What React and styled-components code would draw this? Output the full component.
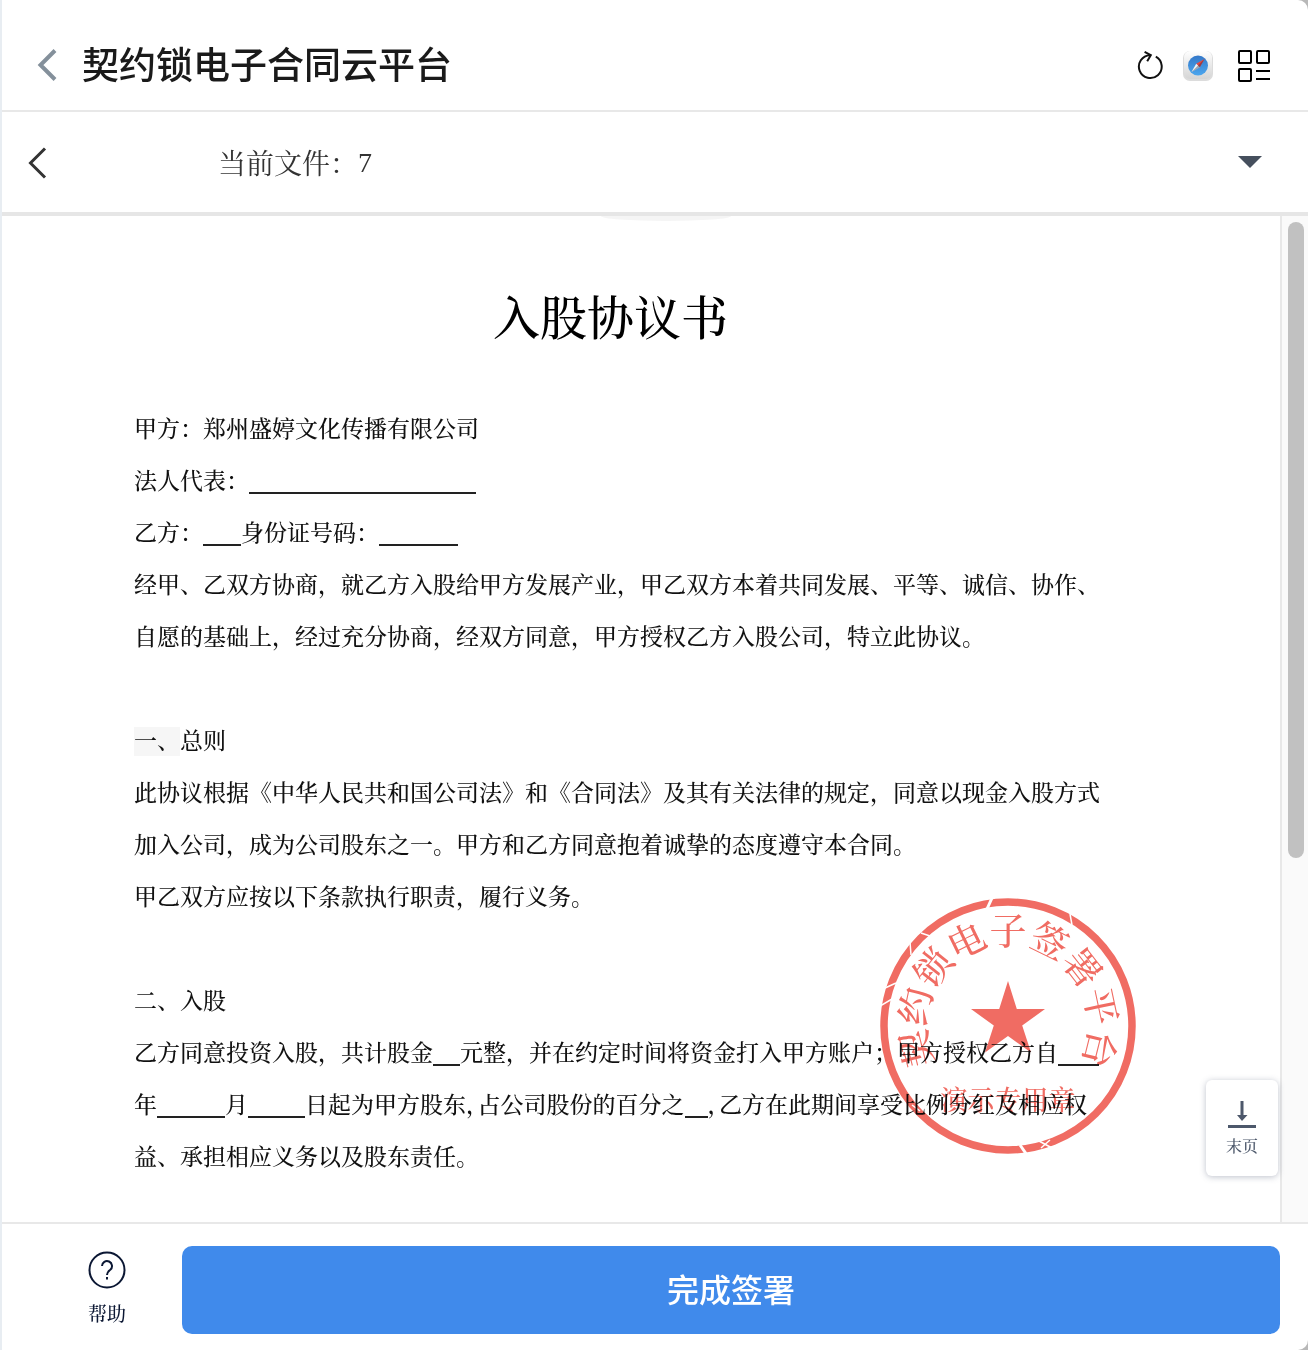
import {Component} from "react";
import styled, {createGlobalStyle} from "styled-components";

const GlobalStyle = createGlobalStyle`
  * {
    box-sizing: border-box;
  }

  body {
    margin: 0;
    background: #b8b8b8;
    color: #1a1a1a;
    font-family: "Liberation Serif", "Noto Serif CJK SC", "Noto Sans CJK SC", serif;
  }

  button, select {
    margin: 0;
    padding: 0;
    border: 0;
    background: none;
    color: inherit;
    font: inherit;
    cursor: pointer;
  }

  svg {
    display: block;
  }
`

const Window = styled.div`
  display: flex;
  flex-direction: column;
  min-height: 100vh;
  border-left: 2px solid #e8edf2;
  border-radius: 0 10px 10px 0;
  background: #fff;
`

const TitleBar = styled.header`
  display: flex;
  align-items: center;
  height: 112px;
  padding: 20px 38px 0 32px;
  border-bottom: 2px solid #e8e8e8;
`

const AppTitle = styled.h1`
  flex: 1;
  margin: 0 0 0 24px;
  padding-bottom: 4px;
  font-family: "Noto Sans CJK SC", sans-serif;
  font-size: 37px;
  font-weight: 500;
  line-height: 52px;
`

const Tools = styled.div`
  display: flex;
  align-items: center;
  gap: 18px;

  button:last-child {
    margin-left: 6px;
  }
`

const FileBar = styled.nav`
  display: flex;
  align-items: center;
  height: 104px;
  padding: 2px 46px 0 22px;
  border-bottom: 4px solid #e6e6e6;
`

const FileLabel = styled.label`
  margin-left: 170px;
  padding-top: 4px;
  color: #333;
  font-size: 28px;
  line-height: 40px;
`

const FileSelect = styled.select`
  flex: 1;
  appearance: none;
  color: #333;
  font-size: 28px;
  line-height: 40px;
`

const Body = styled.main`
  display: flex;
  flex: 1;
`

const Notch = styled.div`
  position: absolute;
  top: 0;
  left: 50%;
  width: 130px;
  height: 5px;
  margin-left: -40px;
  border-radius: 0 0 50% 50% / 0 0 100% 100%;
  background: #f5f5f5;
`

const Paper = styled.article`
  position: relative;
  flex: 1;
  min-width: 0;
  padding: 73px 193px 35px 132px;
  color: #111;
  font-weight: 500;
`

const DocTitle = styled.h2`
  margin: 0 0 55px;
  color: #000;
  font-size: 47px;
  font-weight: 500;
  line-height: 60px;
  text-align: center;
`

const Clause = styled.section`
  margin-bottom: 52px;
`

const Line = styled.p`
  margin: 0;
  font-size: 23px;
  line-height: 52px;
  white-space: nowrap;
`

const Blank = styled.span`
  display: inline-block;
  width: ${props => props.$width}px;
  height: 24px;
  border-bottom: 2px solid #222;
  vertical-align: -5px;
`

const HalfComma = styled.span`
  font-feature-settings: "halt";
`

const Marked = styled.span`
  padding: 2px 0;
  background: #f6f6f6;
`

const Seal = styled.svg`
  position: absolute;
  top: 682px;
  right: 144px;
  mix-blend-mode: multiply;
`

const LastPage = styled.button`
  position: absolute;
  right: 2px;
  bottom: 46px;
  display: flex;
  flex-direction: column;
  align-items: center;
  gap: 7px;
  width: 72px;
  height: 96px;
  padding-top: 20px;
  border-radius: 6px;
  background: #fff;
  box-shadow: 0 1px 6px rgba(70, 80, 110, 0.35);
  color: #4d586b;
  font-size: 16px;
  line-height: 24px;
`

const ScrollTrack = styled.div`
  flex: none;
  width: 28px;
  padding: 6px 4px 6px 6px;
  border-left: 2px solid #e8e8e8;
  background: #fafafa;
`

const ScrollThumb = styled.div`
  height: 64%;
  border-radius: 8px;
  background: #c1c1c1;
`

const ActionBar = styled.footer`
  display: flex;
  align-items: center;
  height: 128px;
  padding: 6px 28px 0 70px;
  border-top: 2px solid #e8e8e8;
`

const HelpButton = styled.button`
  display: flex;
  flex-direction: column;
  align-items: center;
  gap: 12px;
  width: 70px;
  color: #0b1733;
  font-size: 19px;
  font-weight: 500;
  line-height: 28px;
`

const SubmitButton = styled.button`
  flex: 1;
  height: 88px;
  margin-left: 40px;
  padding-bottom: 4px;
  border-radius: 10px;
  background: #408aeb;
  color: #fff;
  font-family: "Noto Sans CJK SC", sans-serif;
  font-size: 32px;
  font-weight: 500;
`

const sealName = "契约锁电子签署平台"

function Chevron({color, weight}) {
    return (
        <svg width="24" height="36" viewBox="0 0 24 36" fill="none" stroke={color} strokeWidth={weight}>
            <path d="M21 3.500 6.500 18 21 32.500"/>
        </svg>
    )
}

function ReloadIcon() {
    return (
        <svg width="28" height="30" viewBox="0 0 28 30" fill="none" stroke="#111" strokeWidth="2">
            <path d="M19.800 6.600A11.400 11.400 0 1 1 14 5.200"/>
            <path d="M8.600 1.800 14.800 5.200l-3.600 6"/>
        </svg>
    )
}

function SafariIcon() {
    return (
        <svg width="32" height="32" viewBox="0 0 32 32">
            <defs>
                <linearGradient id="tile" x1="0" y1="0" x2="0" y2="1">
                    <stop offset="0" stopColor="#fff"/>
                    <stop offset="1" stopColor="#d5d5d5"/>
                </linearGradient>
                <linearGradient id="dial" x1="0" y1="0" x2="0" y2="1">
                    <stop offset="0" stopColor="#3478c9"/>
                    <stop offset="1" stopColor="#4ba6ee"/>
                </linearGradient>
            </defs>
            <rect x="1" y="2" width="30" height="30" rx="7" fill="#dcdcdc"/>
            <rect x="2" y="2" width="28" height="28" rx="6" fill="url(#tile)"/>
            <circle cx="16" cy="16.500" r="10" fill="url(#dial)"/>
            <path d="M22.500 10 14.200 14.700l3.600 3.600z" fill="#e8483f"/>
            <path d="M9.500 23 14.200 14.700l3.600 3.600z" fill="#f4f4f4"/>
            <path d="M22.500 10 17.800 18.300 9.500 23z" fill="#1d2f4d" opacity="0.4"/>
        </svg>
    )
}

function AppsIcon() {
    return (
        <svg width="32" height="34" viewBox="0 -2 32 34" fill="none" stroke="#000" strokeWidth="2">
            <rect x="1" y="1" width="12" height="12" rx="1"/>
            <rect x="19" y="1" width="12" height="12" rx="1"/>
            <rect x="1" y="19" width="12" height="12" rx="1"/>
            <path d="M18 21h14M18 29h14"/>
        </svg>
    )
}

function CompanySeal() {
    return (
        <Seal width="256" height="256" viewBox="0 0 256 256" fill="#f06c63" role="img" aria-label="印章">
            <circle cx="128" cy="128" r="124" fill="none" stroke="#f06c63" strokeWidth="7.500"/>
            <g stroke="#fff" fill="none">
                <path d="M112 0 107 11M140 247l7 10" strokeWidth="3"/>
                <path d="M190 16l2 11M41 35l9 3M30 44l1 13M5 90l11-5M0 108l12-7" strokeWidth="1.500"/>
                <path d="M159 243l13 7M161 250l9-8M32 207l8 6" strokeWidth="1.500"/>
            </g>
            <path d="M128 83l8.800 28H165l-22.800 16.600L151 154.600 128 138l-23 16.600 8.800-27L91 111h28.200z"/>
            <g fontSize="37" textAnchor="middle">
                {sealName.split("").map((char, i) => (
                    <text key={char} x="128" y="47" transform={`rotate(${(i - 4) * 26} 128 128)`}>{char}</text>
                ))}
            </g>
            <text x="128" y="212" fontSize="27" textAnchor="middle">演示专用章</text>
        </Seal>
    )
}

class App extends Component{
    render() {
        return (
            <Window>
                <GlobalStyle/>
                <TitleBar>
                    <button aria-label="返回"><Chevron color="#84909b" weight="4"/></button>
                    <AppTitle>契约锁电子合同云平台</AppTitle>
                    <Tools>
                        <button aria-label="刷新"><ReloadIcon/></button>
                        <button aria-label="浏览器打开"><SafariIcon/></button>
                        <button aria-label="应用"><AppsIcon/></button>
                    </Tools>
                </TitleBar>
                <FileBar>
                    <button aria-label="上一页"><Chevron color="#333" weight="3"/></button>
                    <FileLabel htmlFor="file">当前文件：</FileLabel>
                    <FileSelect id="file" defaultValue="7">
                        <option value="7">7</option>
                    </FileSelect>
                    <svg width="24" height="14" viewBox="0 0 24 14" fill="#454f5d">
                        <path d="M0 0h24L12 12z"/>
                    </svg>
                </FileBar>
                <Body>
                    <Paper>
                        <Notch/>
                        <DocTitle>入股协议书</DocTitle>
                        <Clause>
                            <Line>甲方：郑州盛婷文化传播有限公司</Line>
                            <Line>法人代表：<Blank $width={227}/></Line>
                            <Line>乙方：<Blank $width={38}/>身份证号码：<Blank $width={79}/></Line>
                            <Line>经甲、乙双方协商，就乙方入股给甲方发展产业，甲乙双方本着共同发展、平等、诚信、协作、</Line>
                            <Line>自愿的基础上，经过充分协商，经双方同意，甲方授权乙方入股公司，特立此协议。</Line>
                        </Clause>
                        <Clause>
                            <Line><Marked>一、</Marked>总则</Line>
                            <Line>此协议根据《中华人民共和国公司法》和《合同法》及其有关法律的规定，同意以现金入股方式</Line>
                            <Line>加入公司，成为公司股东之一。甲方和乙方同意抱着诚挚的态度遵守本合同。</Line>
                            <Line>甲乙双方应按以下条款执行职责，履行义务。</Line>
                        </Clause>
                        <section>
                            <Line>二、入股</Line>
                            <Line>
                                乙方同意投资入股，共计股金<Blank $width={27}/>元整，并在约定时间将资金打入甲方账户；甲方授权乙方自<Blank $width={41}/>
                            </Line>
                            <Line>
                                年<Blank $width={68}/>月<Blank $width={57}/>日起为甲方股东<HalfComma>，</HalfComma>占公司股份的百分之<Blank $width={23}/><HalfComma>，</HalfComma>乙方在此期间享受比例分红及相应权
                            </Line>
                            <Line>益、承担相应义务以及股东责任。</Line>
                        </section>
                        <CompanySeal/>
                        <LastPage>
                            <svg width="28" height="28" viewBox="0 0 28 28" fill="#4d586b">
                                <path d="M12.500 1h3v14h4L14 21l-5-6h3.500zM0 25h28v3H0z"/>
                            </svg>
                            <span>末页</span>
                        </LastPage>
                    </Paper>
                    <ScrollTrack>
                        <ScrollThumb/>
                    </ScrollTrack>
                </Body>
                <ActionBar>
                    <HelpButton>
                        <svg width="38" height="38" viewBox="0 0 38 38" fill="none" stroke="#0b1733" strokeWidth="2">
                            <circle cx="19" cy="19" r="17.500"/>
                            <path d="M14 15a5 5 0 1 1 8.300 3.800C20.200 20.500 19 21.300 19 24"/>
                            <path d="M19 26v2.500"/>
                        </svg>
                        <span>帮助</span>
                    </HelpButton>
                    <SubmitButton>完成签署</SubmitButton>
                </ActionBar>
            </Window>
        )
    }
}

export default App
